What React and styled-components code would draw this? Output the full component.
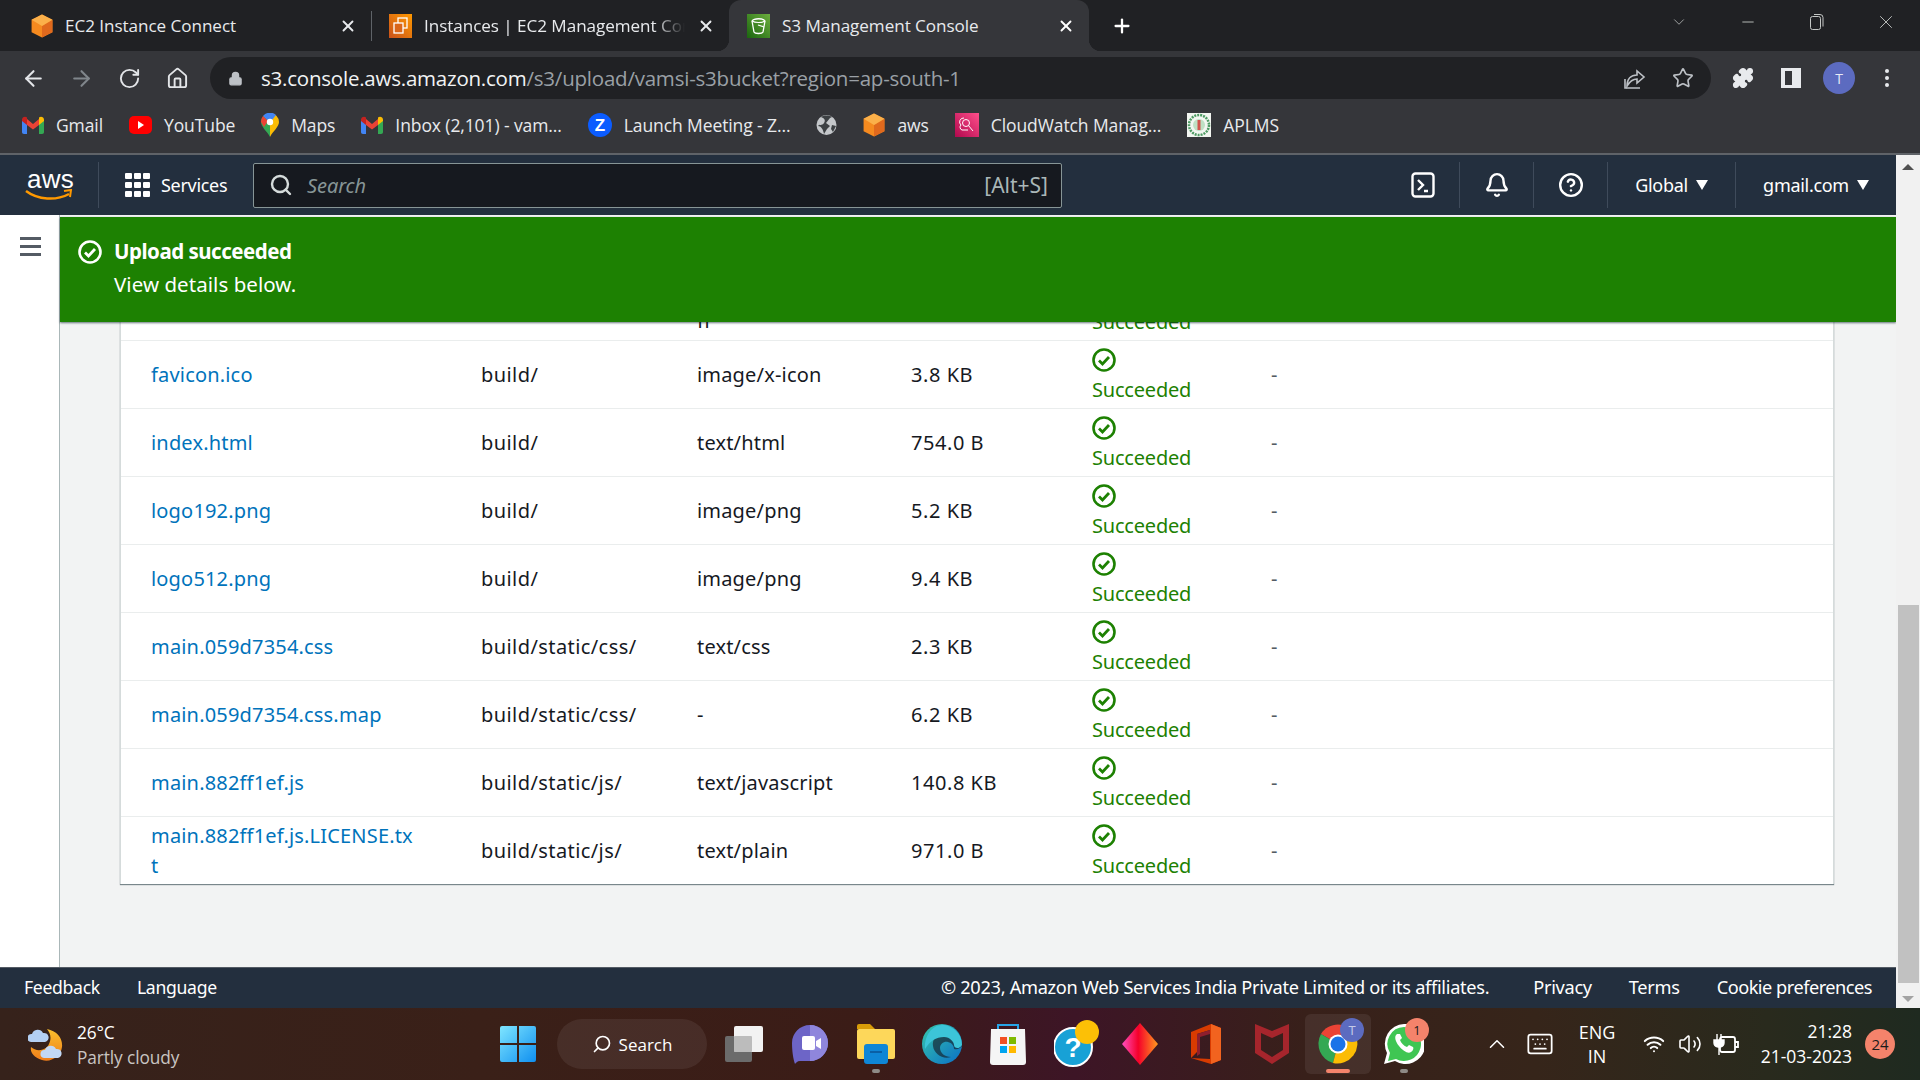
import React from 'react';
import styled, { createGlobalStyle } from 'styled-components';
import { ArrowLeft, ArrowRight, RotateCw, Home, Lock, Star, Puzzle, X, Plus, ChevronDown, Minus, Search as SearchIcon, Bell, CircleHelp, Wifi, Volume2, ChevronUp, Keyboard } from 'lucide-react';

const UI = '"Open Sans", "Noto Sans", sans-serif';
const EMBER = '"Noto Sans", Roboto, sans-serif';

const Global = createGlobalStyle`
  html, body { margin: 0; padding: 0; background: #fff; overflow: hidden; }
  * { box-sizing: border-box; }
`;

const Page = styled.div`
  width: 1920px; height: 1080px; display: flex; flex-direction: column; overflow: hidden; font-family: ${EMBER};
`;

/* ------- tab strip ------- */
const TabStrip = styled.div`
  height: 51px; background: #202124; display: flex; align-items: stretch; color: #e8eaed; font-family: ${UI};
`;
const Tab = styled.div`
  position: relative; width: ${p => p.$w}px; margin-left: ${p => p.$ml || 0}px; display: flex; align-items: center;
  padding: 0 14px 0 ${p => p.$pl}px; gap: 12px; font-size: 17.1px; letter-spacing: -0.05px; white-space: nowrap;
  ${p => p.$active && `
    background: #35363a; border-radius: 12px 12px 0 0; color: #fff;
    &::before, &::after { content: ''; position: absolute; bottom: 0; width: 12px; height: 12px; }
    &::before { left: -12px; background: radial-gradient(circle at 0 0, transparent 12px, #35363a 12.5px); }
    &::after { right: -12px; background: radial-gradient(circle at 100% 0, transparent 12px, #35363a 12.5px); }
  `}
`;
const TabTitle = styled.span`
  flex: 1; overflow: hidden; position: relative; color: #e8eaed;
`;
const FadedTitle = styled(TabTitle)`
  -webkit-mask-image: linear-gradient(to right, #000 88%, transparent 100%);
  mask-image: linear-gradient(to right, #000 88%, transparent 100%);
`;
const TabDivider = styled.div`
  width: 1px; height: 30px; background: #5f6368; align-self: center;
`;
const NewTab = styled.div`
  margin-left: 22px; width: 22px; display: flex; align-items: center; justify-content: center; color: #fff;
`;
const WindowControls = styled.div`
  margin-left: auto; display: flex; align-items: center; height: 44px; padding-right: 0; color: #c4c7c5;
`;
const WinButton = styled.div`
  width: 69px; display: flex; justify-content: center; align-items: center;
`;

/* ------- address bar ------- */
const Toolbar = styled.div`
  height: 52px; background: #35363a; display: flex; align-items: center; padding-top: 2px; color: #dadce0; font-family: ${UI};
`;
const ToolButton = styled.div`
  width: 48px; display: flex; justify-content: center; align-items: center; flex: none;
  color: ${p => p.$dim ? '#80868b' : '#e3e5e8'};
`;
const LeftTools = styled.div`
  display: flex; padding-left: 9px; width: 210px;
`;
const AddressBar = styled.div`
  width: 1501px; height: 42px; margin-top: 0; background: #202124; border-radius: 21px; display: flex; align-items: center;
  padding: 0 4px 0 18px; flex: none;
`;
const Url = styled.div`
  margin-left: 18px; font-size: 20.5px; letter-spacing: -0.22px; color: #9aa0a6; white-space: nowrap; flex: 1;
  b { font-weight: 400; color: #f1f3f4; }
`;
const RightTools = styled.div`
  display: flex; padding-left: 8px;
`;
const Avatar = styled.div`
  width: 32px; height: 32px; border-radius: 50%; background: #5c6bc0; color: #e8eaf6; font-size: 14px;
  display: flex; align-items: center; justify-content: center;
`;

/* ------- bookmarks ------- */
const Bookmarks = styled.div`
  height: 52px; background: #35363a; border-bottom: 2px solid #5f6368; display: flex; align-items: center; gap: 26px; padding-left: 22px;
  padding-bottom: 6px; font-family: ${UI}; font-size: 17.5px; letter-spacing: -0.1px; color: #e8eaed;
`;
const Bookmark = styled.div`
  display: flex; align-items: center; gap: 12px; white-space: nowrap;
`;

/* ------- browser content ------- */
const Body = styled.div`
  flex: 1; display: flex; min-height: 0; position: relative;
`;
const Viewport = styled.div`
  flex: 1; display: flex; flex-direction: column; min-width: 0;
`;
const Nav = styled.div`
  height: 60px; background: #232f3e; display: flex; align-items: center; color: #fff; flex: none;
`;
const LogoBox = styled.div`
  width: 99px; padding-left: 25px; height: 46px; border-right: 1px solid #3f4b5b; display: flex; flex-direction: column; align-items: flex-start; justify-content: center;
`;
const LogoText = styled.span`
  font-family: "Liberation Sans", sans-serif; font-size: 26px; line-height: 20px; letter-spacing: 0.2px; margin-left: 2px; height: 20px;
`;
const ServicesButton = styled.div`
  width: 154px; display: flex; align-items: center; gap: 11px; padding-left: 26px; font-size: 18px; letter-spacing: -0.3px;
`;
const SearchBox = styled.div`
  width: 809px; height: 45px; background: #16191f; border: 1px solid #879596; border-radius: 2px; display: flex; align-items: center;
  padding: 0 13px 0 15px; gap: 14px; color: #d5dbdb; flex: none;
`;
const SearchHint = styled.span`
  font-style: italic; font-size: 20px; color: #879596; flex: 1; letter-spacing: -0.1px;
`;
const SearchKey = styled.span`
  font-size: 21px; color: #aab7b8;
`;
const NavRight = styled.div`
  margin-left: auto; display: flex; align-items: center; height: 46px;
`;
const NavIcon = styled.div`
  width: 74px; height: 46px; display: flex; align-items: center; justify-content: center; border-right: 1px solid #3f4b5b;
`;
const NavMenu = styled.div`
  width: ${p => p.$w}px; height: 46px; display: flex; align-items: center; justify-content: center; gap: 8px; font-size: 18px; letter-spacing: -0.3px;
  ${p => p.$border && 'border-right: 1px solid #3f4b5b;'}
`;
const Caret = styled.span`
  width: 0; height: 0; border-left: 6px solid transparent; border-right: 6px solid transparent; border-top: 10px solid #fff;
`;
const Content = styled.div`
  flex: 1; min-height: 0; display: flex; position: relative; padding-top: 0; background: #fff;
`;
const SideRail = styled.div`
  width: 60px; flex: none; background: #fff; border-right: 1px solid #aab7b8; padding: 22px 0 0 20px;
`;
const BurgerLine = styled.div`
  width: 21px; height: 3px; background: #545b64; margin-bottom: 5px;
`;
const Main = styled.div`
  flex: 1; min-width: 0; background: #f2f3f3; display: flex; flex-direction: column; justify-content: flex-end; overflow: hidden; padding: 0 62px 83px 60px;
`;
const Table = styled.div`
  background: #fff; border-left: 1px solid #d5dbdb; border-right: 1px solid #d5dbdb; box-shadow: 0 1px 1px 0 rgba(0,28,36,.5); flex: none;
`;
const Row = styled.div`
  height: 68px; display: grid; grid-template-columns: 330px 216px 214px 181px 179px 1fr; align-items: center; padding-left: 30px;
  font-size: 20px; line-height: 30px; letter-spacing: 0.18px; color: #16191f;
  & + & { border-top: 1px solid #eaeded; }
`;
const NameLink = styled.a`
  color: #0073bb; max-width: 266px; word-break: break-all; text-decoration: none;
`;
const PathCell = styled.span`
  letter-spacing: 0.42px;
`;
const SizeCell = styled.span`
  letter-spacing: 0.55px;
`;
const Status = styled.div`
  display: flex; flex-direction: column; color: #1d8102; align-items: flex-start; line-height: 30px; padding-top: 4px; letter-spacing: -0.2px;
  svg { display: block; height: 24px; margin: 0 0 3px 0; }
`;
const Dash = styled.span`
  color: #545b64;
`;
const Flash = styled.div`
  position: absolute; left: 60px; right: 0; top: 2px; height: 105px; background: #1d8102; color: #fff; display: flex; padding: 18px 18px;
  gap: 12px; box-shadow: 0 1px 2px rgba(0,28,36,.6); font-size: 20.5px; line-height: 33px; letter-spacing: 0.05px;
  > svg { margin-top: 5px; }
`;
const FlashTitle = styled.div`
  font-weight: 700; letter-spacing: -0.5px;
`;
const Footer = styled.div`
  height: 41px; flex: none; background: #232f3e; border-top: 1px solid #545b64; display: flex; align-items: center; padding: 0 24px 2px; color: #fff;
  font-size: 18.2px; letter-spacing: -0.3px;
`;
const FootLeft = styled.div`
  display: flex; gap: 37px; font-size: 17.6px;
`;
const FootRight = styled.div`
  margin-left: auto; display: flex; gap: 37px; padding-right: 0;
`;
const Copyright = styled.span`
  margin-right: 7px;
`;
const CookieLink = styled.span`
  letter-spacing: -0.5px;
`;
const Scrollbar = styled.div`
  width: 24px; flex: none; background: #f1f1f1; position: relative;
`;
const ScrollArrow = styled.span`
  position: absolute; left: 6px; ${p => p.$up ? 'top: 9px;' : 'bottom: 6px;'} width: 0; height: 0;
  border-left: 6px solid transparent; border-right: 6px solid transparent;
  ${p => p.$up ? 'border-bottom: 6px solid #505050;' : 'border-top: 6px solid #a3a3a3;'}
`;
const ScrollThumb = styled.div`
  position: absolute; left: 2px; right: 1px; top: 450px; height: 378px; background: #c1c1c1;
`;

/* ------- windows taskbar ------- */
const Taskbar = styled.div`
  height: 72px; flex: none; color: #fff; font-family: ${UI}; display: flex; align-items: center; position: relative;
  background: linear-gradient(90deg, #36221b 0%, #3a2018 25%, #3b1c17 45%, #3d1526 56%, #38201a 68%, #36251a 80%, #292a1d 92%, #1f2a20 100%);
`;
const Weather = styled.div`
  width: 485px; padding-left: 28px; display: flex; align-items: center; gap: 11px; flex: none; font-size: 17.3px; line-height: 25px; letter-spacing: -0.1px;
`;
const WeatherText = styled.div`
  padding-top: 2px;
`;
const WeatherSub = styled.div`
  color: #c9c5c2;
`;
const Slot = styled.div`
  width: ${p => p.$w || 66}px; height: 60px; flex: none; display: flex; align-items: center; justify-content: center; position: relative;
  padding-left: ${p => p.$nudge || 0}px;
  ${p => p.$active && 'background: rgba(255,255,255,.07); border-radius: 6px;'}
`;
const SearchPill = styled.div`
  width: 150px; height: 50px; margin: 0 4px 0 6px; background: rgba(255,255,255,.07); border-radius: 25px; display: flex; align-items: center; justify-content: center; gap: 7px;
  font-size: 17px; flex: none;
`;
const RunDot = styled.span`
  position: absolute; bottom: ${p => p.$bottom ?? 1}px; left: 50%; transform: translateX(-50%); width: ${p => p.$w || 8}px; height: 4px; border-radius: 2px; background: ${p => p.$c || '#8e8a86'};
`;
const Badge = styled.span`
  position: absolute; top: ${p => p.$t}px; right: ${p => p.$r}px; width: 24px; height: 24px; border-radius: 50%; background: ${p => p.$c};
  color: ${p => p.$fg || '#1b1b1b'}; font-size: 13px; display: flex; align-items: center; justify-content: center;
`;
const Tray = styled.div`
  display: flex; align-items: center; margin-left: 35px; flex: none;
`;
const TrayIcon = styled.div`
  width: ${p => p.$w || 36}px; display: flex; justify-content: center; align-items: center; color: #fff;
`;
const Lang = styled.div`
  width: 62px; margin: 0 8px 0 8px; text-align: center; font-size: 18px; line-height: 24px;
`;
const Clock = styled.div`
  margin-left: 4px; width: 104px; text-align: right; font-size: 17.5px; line-height: 25px;
`;
const Notif = styled.span`
  margin-left: 13px; width: 30px; height: 30px; border-radius: 50%; background: #f4836b; color: #1b1b1b; font-size: 15px; display: flex; align-items: center; justify-content: center; flex: none;
`;

/* ------- drawings ------- */
const AwsCube = () => (
  <svg width="22" height="24" viewBox="2.500 .5 19 23" preserveAspectRatio="none"><path d="M12 1l9 5v12l-9 5-9-5V6z" fill="#f58a1f" /><path d="M12 12l9-6v12l-9 5z" fill="#e0691d" /><path d="M12 1l9 5-9 6-9-6z" fill="#fbb04a" /></svg>
);
const Ec2Icon = () => (
  <svg width="23" height="24" viewBox="0 0 23 24"><defs><linearGradient id="eg" x1="0" y1="1" x2="1" y2="0"><stop offset="0" stopColor="#c8511b" /><stop offset="1" stopColor="#f90" /></linearGradient></defs><rect width="23" height="24" fill="url(#eg)" /><rect x="9" y="4" width="9" height="10" fill="none" stroke="#fff" strokeWidth="1.3" /><rect x="5" y="9" width="9" height="10" fill="#d9661a" stroke="#fff" strokeWidth="1.3" /></svg>
);
const S3Icon = () => (
  <svg width="23" height="24" viewBox="0 0 23 24"><defs><linearGradient id="sg" x1="0" y1="1" x2="1" y2="0"><stop offset="0" stopColor="#1b660f" /><stop offset="1" stopColor="#6cae3e" /></linearGradient></defs><rect width="23" height="24" fill="url(#sg)" /><path d="M5 7c2-3 11-3 13 0l-2 11c-1 2-8 2-9 0z" fill="none" stroke="#fff" strokeWidth="1.3" /><path d="M5 7c3 2 10 2 13 0M11 11l6 2" stroke="#fff" strokeWidth="1.2" fill="none" /></svg>
);
const GmailIcon = () => (
  <svg width="22" height="18" viewBox="0 0 22 18"><path d="M0 3v13c0 1 .7 2 2 2h3V8z" fill="#4285f4" /><path d="M22 3v13c0 1-.7 2-2 2h-3V8z" fill="#34a853" /><path d="M5 9V3l6 5 6-5v6l-6 4.500z" fill="#ea4335" /><path d="M0 4c0-3 3-4 5-2.500V9L0 5z" fill="#c5221f" /><path d="M22 4c0-3-3-4-5-2.500V9l5-4z" fill="#fbbc04" /></svg>
);
const YoutubeIcon = () => (
  <svg width="23" height="24" viewBox="0 0 23 24"><rect y="3" width="23" height="18" rx="5" fill="#f00" /><path d="M9 8l6 4-6 4z" fill="#fff" /></svg>
);
const MapsIcon = () => (
  <svg width="18" height="24" viewBox="0 0 18 24"><path d="M9 0a9 9 0 019 9c0 5-6 9-9 15z" fill="#fbbc04" /><path d="M9 0a9 9 0 00-9 9c0 5 6 9 9 15z" fill="#34a853" /><path d="M2 3a9 9 0 0113-1l-4 5H6z" fill="#4285f4" /><path d="M0 9a9 9 0 012-6l5 5-4 6z" fill="#ea4335" /><circle cx="9" cy="9" r="3.200" fill="#fff" /></svg>
);
const ZIcon = () => (
  <svg width="24" height="24" viewBox="0 0 24 24"><circle cx="12" cy="12" r="12" fill="#0b5cff" /><text x="12" y="18" textAnchor="middle" fontSize="17" fontWeight="700" fill="#fff" fontFamily="Liberation Sans">Z</text></svg>
);
const GlobeIcon = () => (
  <svg width="21" height="22" viewBox="0 0 21 22"><circle cx="10.500" cy="11" r="10" fill="#c4c7ca" /><path d="M5 3c3 1 5 3 3 6s-5 1-6 3c3 0 5 3 6 8l3-5 3-3-4-3 4-5 2-1c-3-2-8-2-11 0z" fill="#3c4043" /><path d="M16 11l4 1-3 6-2-3z" fill="#3c4043" /></svg>
);
const CloudWatchIcon = () => (
  <svg width="24" height="24" viewBox="0 0 24 24"><defs><linearGradient id="cw" x1="0" y1="1" x2="1" y2="0"><stop offset="0" stopColor="#b0084d" /><stop offset="1" stopColor="#ff4f8b" /></linearGradient></defs><rect width="24" height="24" fill="url(#cw)" /><circle cx="11" cy="10" r="3.500" fill="none" stroke="#fff" /><path d="M13.500 12.500L18 18M9 5a4 4 0 00-3 7 3 3 0 001 5h6" fill="none" stroke="#fff" /></svg>
);
const SealIcon = () => (
  <svg width="24" height="24" viewBox="0 0 24 24"><rect width="24" height="24" fill="#f3f6f1" /><circle cx="12" cy="12" r="10" fill="none" stroke="#4d9a63" strokeWidth="2.500" strokeDasharray="2 1" /><circle cx="12" cy="12" r="6" fill="#bfe0c4" /><rect x="10.500" y="7" width="3" height="10" fill="#d1544d" /></svg>
);
const ShareIcon = () => (
  <svg width="22" height="24" viewBox="0 0 22 24" fill="none" stroke="#bdc1c6" strokeWidth="1.600"><path d="M3 20c0-7 4-11 10-11V5l7 6-7 6v-4c-4 0-7 2-10 7z" /><path d="M1 13v9h15" /></svg>
);
const PanelIcon = () => (
  <svg width="20" height="20" viewBox="0 0 20 20"><path d="M0 0h20v20H0z" fill="#e8eaed" /><path d="M4 3h7v14H4z" fill="#35363a" /></svg>
);
const DotsIcon = () => (
  <svg width="4" height="20" viewBox="0 0 4 20" fill="#e8eaed"><circle cx="2" cy="3" r="2" /><circle cx="2" cy="10" r="2" /><circle cx="2" cy="17" r="2" /></svg>
);
const Smile = () => (
  <svg width="48" height="13" viewBox="0 0 48 13" fill="none"><path d="M1 2c12 9 30 10 43 3" stroke="#f90" strokeWidth="2.500" /><path d="M39 2l7-1-1 7" stroke="#f90" strokeWidth="2" /></svg>
);
const GridIcon = () => (
  <svg width="25" height="24" viewBox="0 0 25 24" fill="#fff">{[0, 9, 18].flatMap(y => [0, 9, 18].map(x => <rect key={`${x}-${y}`} x={x} y={y} width="7" height="6" rx="1" />))}</svg>
);
const TerminalIcon = () => (
  <svg width="24" height="26" viewBox="0 0 24 26" fill="none" stroke="#fff" strokeWidth="2.400"><rect x="1.500" y="1.500" width="21" height="23" rx="3" /><path d="M7 8l5 5-5 5M13 19h4" /></svg>
);
const CheckCircle = ({ c = '#1d8102', s = 24 }) => (
  <svg width={s} height={s} viewBox="0 0 24 24" fill="none" stroke={c}><circle cx="12" cy="12" r="10.500" strokeWidth="2.600" /><path d="M7 12.500l3.500 3.500L17 9" strokeWidth="2.800" /></svg>
);
const WeatherIcon = () => (
  <svg width="38" height="36" viewBox="0 0 38 36"><defs><linearGradient id="mo" x1="0" y1="0" x2="0" y2="1"><stop offset="0" stopColor="#fbc02d" /><stop offset="1" stopColor="#ef7d1a" /></linearGradient></defs><path d="M19 3c10 2 16 9 15 18s-11 16-20 13S2 26 3 21c5 5 15 4 18-3s1-11-2-15z" fill="url(#mo)" /><path d="M3 16a4 4 0 011-8 6 6 0 0111-1 4 4 0 012 9z" fill="#b3cff2" /><path d="M16 32a4 4 0 011-8 6 6 0 0111-1 4 4 0 012 9z" fill="#c2d8f5" /></svg>
);
const WinLogo = () => (
  <svg width="36" height="36" viewBox="0 0 36 36"><defs><linearGradient id="wn" x1="0" y1="0" x2="1" y2="1"><stop offset="0" stopColor="#7fe6ff" /><stop offset="1" stopColor="#0f8ff0" /></linearGradient></defs><path d="M0 2a2 2 0 012-2h15v17H0zM19 0h15a2 2 0 012 2v15H19zM0 19h17v17H2a2 2 0 01-2-2zM19 19h17v15a2 2 0 01-2 2H19z" fill="url(#wn)" /></svg>
);
const TaskViewIcon = () => (
  <svg width="38" height="36" viewBox="0 0 38 36"><rect x="0" y="10" width="27" height="26" rx="2" fill="#6b6b6b" /><rect x="9" y="0" width="29" height="26" rx="2" fill="#f2f2f2" /><rect x="9" y="10" width="18" height="16" rx="1" fill="#bcbcbc" /></svg>
);
const MeetIcon = () => (
  <svg width="36" height="40" viewBox="0 0 36 40"><path d="M18 1c10 0 18 8 18 18s-8 18-18 18H8c-3 0-4 2-5 3-2-5-3-14-3-21C0 9 8 1 18 1z" fill="#6d65c7" /><path d="M18 1c10 0 18 8 18 18s-8 18-18 18z" fill="#8f86dc" /><rect x="10" y="12" width="13" height="14" rx="2" fill="#fff" /><path d="M24 17l5-3v11l-5-3z" fill="#fff" /></svg>
);
const FilesIcon = () => (
  <svg width="38" height="40" viewBox="0 0 38 40"><path d="M0 2a2 2 0 012-2h11l5 5H0z" fill="#d89c08" /><rect y="5" width="38" height="30" rx="2" fill="#fdd75a" /><rect x="7" y="20" width="24" height="20" rx="3" fill="#0f86d6" /><rect x="13" y="27" width="12" height="2" fill="#0a5fa5" /></svg>
);
const EdgeIcon = () => (
  <svg width="40" height="40" viewBox="0 0 40 40"><defs><linearGradient id="ed" x1="0" y1="0" x2="1" y2="1"><stop offset="0" stopColor="#37c8ab" /><stop offset="1" stopColor="#0a6ec7" /></linearGradient></defs><circle cx="20" cy="20" r="20" fill="url(#ed)" /><path d="M40 22c-1-10-10-15-18-14C14 9 10 16 11 22c1 8 10 14 18 11-6 0-11-4-11-9 0-4 4-7 8-6s6 4 6 7c4 1 6-1 8-3z" fill="#171f2a" opacity=".65" /><path d="M20 1c10 0 20 8 20 20-3 5-8 3-8 0s-4-8-10-8c-8 0-14 4-19 12C2 12 10 1 20 1z" fill="#3cc5d8" /></svg>
);
const StoreIcon = () => (
  <svg width="36" height="42" viewBox="0 0 36 42"><path d="M8 6V2h20v4" fill="none" stroke="#27a4e8" strokeWidth="2" /><path d="M1 6h34l1 33a3 3 0 01-3 3H3a3 3 0 01-3-3z" fill="#f5f5f5" /><rect x="10" y="14" width="7" height="7" fill="#f25022" /><rect x="19" y="14" width="7" height="7" fill="#7fba00" /><rect x="10" y="23" width="7" height="7" fill="#00a4ef" /><rect x="19" y="23" width="7" height="7" fill="#ffb900" /></svg>
);
const HelpApp = () => (
  <svg width="46" height="48" viewBox="0 0 46 48"><circle cx="19" cy="27" r="19" fill="#18a1d6" stroke="#fff" strokeWidth="2" /><text x="19" y="37" textAnchor="middle" fontSize="28" fontWeight="700" fill="#fff" fontFamily="Liberation Sans">?</text><circle cx="33" cy="12" r="12" fill="#fcc006" /></svg>
);
const Diamond = () => (
  <svg width="36" height="42" viewBox="0 0 36 42"><defs><linearGradient id="di" x1="0" y1="0" x2="1" y2="0"><stop offset="0" stopColor="#ff4fc0" /><stop offset=".45" stopColor="#f5002a" /><stop offset="1" stopColor="#ff9a1f" /></linearGradient></defs><path d="M18 0l18 21-18 21L0 21z" fill="url(#di)" /></svg>
);
const OfficeIcon = () => (
  <svg width="30" height="40" viewBox="0 0 30 40"><path d="M20 0l10 4v32l-10 4-20-6 19 1V6L6 10v18l-6 6V8z" fill="#d83b01" /><path d="M20 0l10 4v32l-10 4z" fill="#f2631f" /><path d="M6 10l13-4v4L9 13v17l-3 2z" fill="#8f1f2d" /></svg>
);
const McAfee = () => (
  <svg width="34" height="40" viewBox="0 0 34 40"><path d="M0 0l17 7 17-7v29L17 40 0 29zM6 9v17l11 7 11-7V9l-11 5z" fill="#a6252c" fillRule="evenodd" /></svg>
);
const ChromeIcon = () => (
  <svg width="40" height="40" viewBox="0 0 40 40"><path d="M20 20L3 10A20 20 0 0137 10z" fill="#ea4335" /><path d="M20 20L3 10a20 20 0 0012 29z" fill="#34a853" /><path d="M20 20l17-10a20 20 0 01-22 29z" fill="#fbbc04" /><circle cx="20" cy="20" r="9.500" fill="#fff" /><circle cx="20" cy="20" r="7.500" fill="#1a73e8" /></svg>
);
const WhatsApp = () => (
  <svg width="40" height="40" viewBox="0 0 40 40"><path d="M20 0a20 20 0 11-9 37L0 40l3-11A20 20 0 0120 0z" fill="#fff" /><path d="M20 3a17 17 0 11-8 32l-8 2 2-8A17 17 0 0120 3z" fill="#3fc653" /><path d="M13 10c-3 2-2 7 2 12s9 8 12 6c2-1 3-4 2-5l-4-2-2 2c-3-1-6-4-7-7l2-2-2-4z" fill="#fff" /></svg>
);
const Battery = () => (
  <svg width="26" height="26" viewBox="0 0 26 26" fill="none" stroke="#fff" strokeWidth="1.800"><rect x="7" y="6" width="15" height="15" rx="2" /><path d="M22 11h3v5h-3" /><path d="M1 9h10v3a4 4 0 01-4 4H5a4 4 0 01-4-4zM4 9V3M8 9V3M6 16v8" fill="#fff" stroke="#fff" strokeWidth="1.400" /></svg>
);

const rows = [
  ['', '', <><br />ff</>, ''],
  ['favicon.ico', 'build/', 'image/x-icon', '3.8 KB'],
  ['index.html', 'build/', 'text/html', '754.0 B'],
  ['logo192.png', 'build/', 'image/png', '5.2 KB'],
  ['logo512.png', 'build/', 'image/png', '9.4 KB'],
  ['main.059d7354.css', 'build/static/css/', 'text/css', '2.3 KB'],
  ['main.059d7354.css.map', 'build/static/css/', '-', '6.2 KB'],
  ['main.882ff1ef.js', 'build/static/js/', 'text/javascript', '140.8 KB'],
  ['main.882ff1ef.js.LICENSE.txt', 'build/static/js/', 'text/plain', '971.0 B'],
];

const bookmarks = [
  [<GmailIcon />, 'Gmail'], [<YoutubeIcon />, 'YouTube'], [<MapsIcon />, 'Maps'], [<GmailIcon />, 'Inbox (2,101) - vam...'],
  [<ZIcon />, 'Launch Meeting - Z...'], [<GlobeIcon />, null], [<AwsCube />, 'aws'], [<CloudWatchIcon />, 'CloudWatch Manag...'], [<SealIcon />, 'APLMS'],
];

export default function App() {
  return (
    <Page>
      <Global />
      <TabStrip>
        <Tab $w={371} $pl={31}><AwsCube /><TabTitle>EC2 Instance Connect</TabTitle><X size={18} strokeWidth={2.5} /></Tab>
        <TabDivider />
        <Tab $w={357} $pl={17}><Ec2Icon /><FadedTitle>Instances | EC2 Management Console</FadedTitle><X size={18} strokeWidth={2.5} /></Tab>
        <Tab $w={360} $pl={18} $active><S3Icon /><TabTitle>S3 Management Console</TabTitle><X size={18} strokeWidth={2.5} /></Tab>
        <NewTab><Plus size={24} strokeWidth={2.5} /></NewTab>
        <WindowControls>
          <WinButton><ChevronDown size={18} strokeWidth={1} /></WinButton>
          <WinButton><Minus size={18} strokeWidth={1.2} /></WinButton>
          <WinButton><svg width="16" height="18" viewBox="0 0 16 18" fill="none" stroke="#c4c7c5"><rect x="1.500" y="3.500" width="10" height="13" rx="2" /><path d="M5 1.500h6a3 3 0 013 3v9" /></svg></WinButton>
          <WinButton><X size={22} strokeWidth={1} /></WinButton>
        </WindowControls>
      </TabStrip>
      <Toolbar>
        <LeftTools>
          <ToolButton><ArrowLeft size={25} strokeWidth={2} /></ToolButton>
          <ToolButton $dim><ArrowRight size={25} strokeWidth={2} /></ToolButton>
          <ToolButton><RotateCw size={23} strokeWidth={2} /></ToolButton>
          <ToolButton><Home size={23} strokeWidth={2} /></ToolButton>
        </LeftTools>
        <AddressBar>
          <Lock size={15} fill="#bdc1c6" color="#bdc1c6" />
          <Url><b>s3.console.aws.amazon.com</b>/s3/upload/vamsi-s3bucket?region=ap-south-1</Url>
          <ToolButton><ShareIcon /></ToolButton>
          <ToolButton><Star size={22} color="#bdc1c6" strokeWidth={1.8} /></ToolButton>
        </AddressBar>
        <RightTools>
          <ToolButton><Puzzle size={22} fill="#e8eaed" color="#e8eaed" /></ToolButton>
          <ToolButton><PanelIcon /></ToolButton>
          <ToolButton><Avatar>T</Avatar></ToolButton>
          <ToolButton><DotsIcon /></ToolButton>
        </RightTools>
      </Toolbar>
      <Bookmarks>
        {bookmarks.map(([icon, label], i) => <Bookmark key={i}>{icon}{label && <span>{label}</span>}</Bookmark>)}
      </Bookmarks>
      <Body>
        <Viewport>
          <Nav>
            <LogoBox><LogoText>aws</LogoText><Smile /></LogoBox>
            <ServicesButton><GridIcon /><span>Services</span></ServicesButton>
            <SearchBox>
              <SearchIcon size={24} strokeWidth={2.4} />
              <SearchHint>Search</SearchHint>
              <SearchKey>[Alt+S]</SearchKey>
            </SearchBox>
            <NavRight>
              <NavIcon><TerminalIcon /></NavIcon>
              <NavIcon><Bell size={26} strokeWidth={2.2} /></NavIcon>
              <NavIcon><CircleHelp size={26} strokeWidth={2.2} /></NavIcon>
              <NavMenu $w={128} $border><span>Global</span><Caret /></NavMenu>
              <NavMenu $w={160}><span>gmail.com</span><Caret /></NavMenu>
            </NavRight>
          </Nav>
          <Content>
            <SideRail><BurgerLine /><BurgerLine /><BurgerLine /></SideRail>
            <Main>
              <Table>
                {rows.map(([name, key, type, size], i) => (
                  <Row key={i}>
                    <NameLink>{name}</NameLink>
                    <PathCell>{key}</PathCell>
                    <span>{type}</span>
                    <SizeCell>{size}</SizeCell>
                    <Status><CheckCircle /><span>Succeeded</span></Status>
                    <Dash>-</Dash>
                  </Row>
                ))}
              </Table>
            </Main>
            <Flash>
              <CheckCircle c="#fff" s={24} />
              <div>
                <FlashTitle>Upload succeeded</FlashTitle>
                <div>View details below.</div>
              </div>
            </Flash>
          </Content>
          <Footer>
            <FootLeft><span>Feedback</span><span>Language</span></FootLeft>
            <FootRight>
              <Copyright>© 2023, Amazon Web Services India Private Limited or its affiliates.</Copyright>
              <span>Privacy</span><span>Terms</span><CookieLink>Cookie preferences</CookieLink>
            </FootRight>
          </Footer>
        </Viewport>
        <Scrollbar><ScrollArrow $up /><ScrollThumb /><ScrollArrow /></Scrollbar>
      </Body>
      <Taskbar>
        <Weather>
          <WeatherIcon />
          <WeatherText><div>26°C</div><WeatherSub>Partly cloudy</WeatherSub></WeatherText>
        </Weather>
        <Slot><WinLogo /></Slot>
        <SearchPill><SearchIcon size={20} style={{ transform: 'scaleX(-1)' }} /><span>Search</span></SearchPill>
        <Slot><TaskViewIcon /></Slot>
        <Slot><MeetIcon /></Slot>
        <Slot><FilesIcon /><RunDot /></Slot>
        <Slot><EdgeIcon /></Slot>
        <Slot><StoreIcon /></Slot>
        <Slot $nudge={6}><HelpApp /></Slot>
        <Slot><Diamond /></Slot>
        <Slot><OfficeIcon /></Slot>
        <Slot><McAfee /></Slot>
        <Slot $active><ChromeIcon /><Badge $t={4} $r={7} $c="#5c6bc0" $fg="#c5cae9">T</Badge><RunDot $w={24} $c="#f4836b" /></Slot>
        <Slot><WhatsApp /><Badge $t={4} $r={8} $c="#f4836b">1</Badge><RunDot /></Slot>
        <Tray>
          <TrayIcon $w={50}><ChevronUp size={26} strokeWidth={1.4} /></TrayIcon>
          <TrayIcon><Keyboard size={28} strokeWidth={1.5} /></TrayIcon>
          <Lang>ENG<br />IN</Lang>
          <TrayIcon><Wifi size={22} strokeWidth={2.2} /></TrayIcon>
          <TrayIcon><Volume2 size={24} strokeWidth={1.6} /></TrayIcon>
          <TrayIcon><Battery /></TrayIcon>
          <Clock>21:28<br />21-03-2023</Clock>
          <Notif>24</Notif>
        </Tray>
      </Taskbar>
    </Page>
  );
}
